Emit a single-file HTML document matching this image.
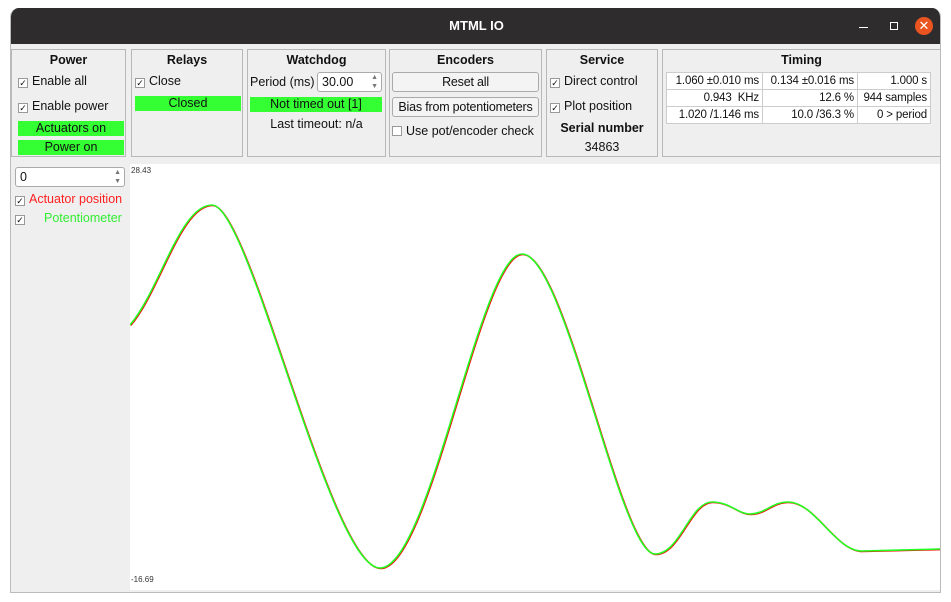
<!DOCTYPE html>
<html><head><meta charset="utf-8"><style>
*{box-sizing:border-box;margin:0;padding:0}
body{width:951px;height:602px;background:#fff;font-family:"Liberation Sans","DejaVu Sans",sans-serif;font-size:12.5px;color:#111;position:relative;overflow:hidden}
.win{position:absolute;left:10px;top:8px;width:931px;height:585px;background:#efefef;border:1px solid #bbb;border-top:none;border-radius:9px 9px 0 0;overflow:hidden}
.tb{position:absolute;left:0;top:0;width:931px;height:36px;background:#2e2c2c;color:#fff;font-weight:bold;font-size:13px;text-align:center;line-height:36px}
.g{position:absolute;top:41px;height:108px;border:1px solid #b8b8b8}
.g h{display:block;text-align:center;font-weight:bold;font-size:12.5px;margin-top:3px}
.a{position:absolute;white-space:nowrap}
.cb{display:inline-block;width:10px;height:10px;border:1px solid #999;background:#fff;font-size:9px;line-height:8px;text-align:center;vertical-align:-1px;margin-right:4px}
.gr{position:absolute;background:#33ff33;text-align:center;height:15px;line-height:15px}
.btn{position:absolute;border:1px solid #aaa;border-radius:3px;background:#f4f4f4;text-align:center;height:20px;line-height:18px;white-space:nowrap;letter-spacing:-0.2px}
table{border-collapse:collapse;background:#fff;table-layout:fixed}
td{border:1px solid #ccc;text-align:right;padding:0 3px;height:17px;font-size:11.5px;white-space:nowrap;letter-spacing:-0.15px;line-height:16px;overflow:hidden}
</style></head><body>
<div class="win">
<div class="tb">MTML IO
<div style="position:absolute;right:74px;top:19px;width:9px;height:1px;background:#fff"></div>
<div style="position:absolute;right:44px;top:14px;width:8px;height:8px;border:1px solid #fff"></div>
<div style="position:absolute;right:9px;top:9px;width:18px;height:18px;border-radius:50%;background:#e95420;line-height:17px;font-size:13px;font-weight:normal">✕</div>
</div>
<div class="g" style="left:0;width:115px"><h>Power</h>
<div class="a" style="left:6px;top:24px"><span class="cb">✓</span>Enable all</div>
<div class="a" style="left:6px;top:49px"><span class="cb">✓</span>Enable power</div>
<div class="gr" style="left:6px;top:71px;width:106px">Actuators on</div>
<div class="gr" style="left:6px;top:90px;width:106px">Power on</div></div>
<div class="g" style="left:120px;width:112px"><h>Relays</h>
<div class="a" style="left:3px;top:24px"><span class="cb">✓</span>Close</div>
<div class="gr" style="left:3px;top:46px;width:106px">Closed</div></div>
<div class="g" style="left:236px;width:139px"><h>Watchdog</h>
<div class="a" style="left:2px;top:25px">Period (ms)</div>
<div style="position:absolute;left:69px;top:22px;width:65px;height:20px;background:#fff;border:1px solid #aaa;border-radius:3px;padding-left:4px;line-height:18px">30.00<span style="position:absolute;right:3px;top:0;font-size:7px;line-height:9px;color:#777">▲<br>▼</span></div>
<div class="gr" style="left:2px;top:47px;width:132px">Not timed out [1]</div>
<div class="a" style="left:0;width:137px;text-align:center;top:67px">Last timeout: n/a</div></div>
<div class="g" style="left:378px;width:153px"><h>Encoders</h>
<div class="btn" style="left:2px;top:22px;width:147px">Reset all</div>
<div class="btn" style="left:2px;top:47px;width:147px">Bias from potentiometers</div>
<div class="a" style="left:2px;top:74px"><span class="cb"></span>Use pot/encoder check</div></div>
<div class="g" style="left:535px;width:112px"><h>Service</h>
<div class="a" style="left:3px;top:24px"><span class="cb">✓</span>Direct control</div>
<div class="a" style="left:3px;top:49px"><span class="cb">✓</span>Plot position</div>
<div class="a" style="left:0;width:110px;text-align:center;top:71px;font-weight:bold">Serial number</div>
<div class="a" style="left:0;width:110px;text-align:center;top:90px">34863</div></div>
<div class="g" style="left:651px;width:279px"><h>Timing</h>
<table style="position:absolute;left:3px;top:22px;width:264px">
<colgroup><col style="width:96px"><col style="width:95px"><col style="width:73px"></colgroup>
<tr><td>1.060 ±0.010 ms</td><td>0.134 ±0.016 ms</td><td>1.000 s</td></tr>
<tr><td>0.943 &nbsp;KHz</td><td>12.6 %</td><td>944 samples</td></tr>
<tr><td>1.020 /1.146 ms</td><td>10.0 /36.3 %</td><td>0 &gt; period</td></tr></table></div>
<div style="position:absolute;left:4px;top:159px;width:110px;height:20px;background:#fff;border:1px solid #aaa;border-radius:3px;padding-left:4px;line-height:18px">0<span style="position:absolute;right:3px;top:0;font-size:7px;line-height:9px;color:#777">▲<br>▼</span></div>
<div class="a" style="left:4px;top:184px"><span class="cb">✓</span><span style="color:#ff2020">Actuator position</span></div>
<div class="a" style="left:4px;top:203px"><span class="cb">✓</span><span style="color:#33ee33;margin-left:15px">Potentiometer</span></div>
</div>
<svg style="position:absolute;left:130px;top:164px" width="810" height="426">
<rect width="810" height="426" fill="#fff"/>
<text x="1" y="9" font-size="8" fill="#333" font-family="Liberation Sans">28.43</text>
<text x="1" y="418" font-size="8" fill="#333" font-family="Liberation Sans">-16.69</text>
<g fill="none" stroke-width="1.6" transform="translate(-130,-164)">
<path stroke="#f00" transform="translate(0.7,0.5)" d="M130,325 C160,290 180,205 212,205 C250,205 330,568 380,568 C430,568 480,254 522,254 C565,254 620,554 655,554 C680,554 690,502 712,502 C730,502 738,514 750,514 C765,514 772,502 788,502 C815,502 835,551 862,551 L940,549"/>
<path stroke="#2f2" d="M130,325 C160,290 180,205 212,205 C250,205 330,568 380,568 C430,568 480,254 522,254 C565,254 620,554 655,554 C680,554 690,502 712,502 C730,502 738,514 750,514 C765,514 772,502 788,502 C815,502 835,551 862,551 L940,549"/>
</g></svg>
</body></html>
